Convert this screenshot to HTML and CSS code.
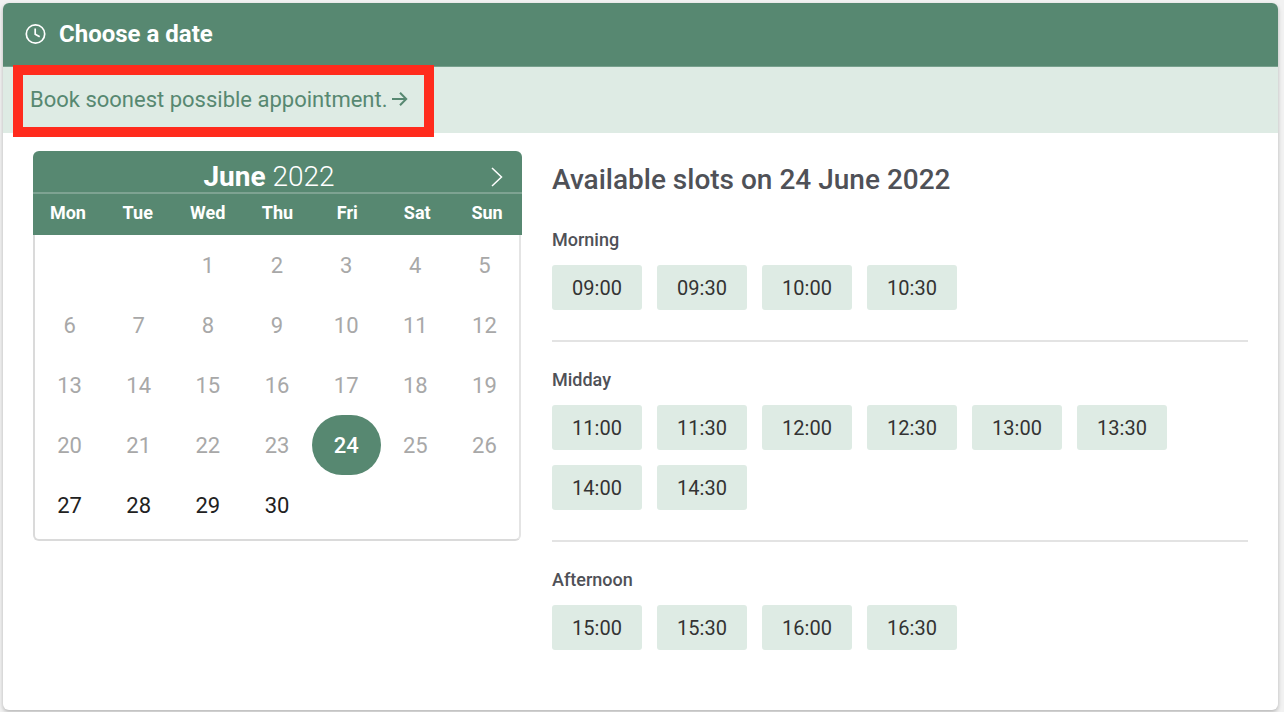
FILE: index.html
```html
<!DOCTYPE html>
<html lang="en">
<head>
<meta charset="utf-8">
<meta name="viewport" content="width=device-width, initial-scale=1">
<title>Choose a date</title>
<link rel="stylesheet" href="styles.css">
</head>
<body>
<main class="card">
  <header class="card-header">
    <svg class="clock" viewBox="0 0 22 22" aria-hidden="true"><circle cx="10.5" cy="11" r="9.2"/><path d="M10.2 5.5v5.7l4.5 2.6"/></svg>
    <h1>Choose a date</h1>
  </header>
  <div class="soonest">
    <a class="soonest-link" href="#slots">Book soonest possible appointment. <svg class="arrow" viewBox="0 0 16 16" aria-hidden="true"><path d="M-1 8h14M7 1.8 13.2 8 7 14.2"/></svg></a>
  </div>
  <div class="content">
    <section class="calendar" aria-label="Calendar">
      <div class="calendar-head">
        <div class="month-bar">
          <h2 class="month"><strong>June</strong> 2022</h2>
          <button class="next" type="button" aria-label="Next month"><svg viewBox="0 0 12 20" aria-hidden="true"><path d="M1 1l9.5 9L1 19"/></svg></button>
        </div>
        <div class="weekdays">
          <span>Mon</span><span>Tue</span><span>Wed</span><span>Thu</span><span>Fri</span><span>Sat</span><span>Sun</span>
        </div>
      </div>
      <div class="days">
        <button class="day first" type="button" disabled>1</button>
        <button class="day" type="button" disabled>2</button>
        <button class="day" type="button" disabled>3</button>
        <button class="day" type="button" disabled>4</button>
        <button class="day" type="button" disabled>5</button>
        <button class="day" type="button" disabled>6</button>
        <button class="day" type="button" disabled>7</button>
        <button class="day" type="button" disabled>8</button>
        <button class="day" type="button" disabled>9</button>
        <button class="day" type="button" disabled>10</button>
        <button class="day" type="button" disabled>11</button>
        <button class="day" type="button" disabled>12</button>
        <button class="day" type="button" disabled>13</button>
        <button class="day" type="button" disabled>14</button>
        <button class="day" type="button" disabled>15</button>
        <button class="day" type="button" disabled>16</button>
        <button class="day" type="button" disabled>17</button>
        <button class="day" type="button" disabled>18</button>
        <button class="day" type="button" disabled>19</button>
        <button class="day" type="button" disabled>20</button>
        <button class="day" type="button" disabled>21</button>
        <button class="day" type="button" disabled>22</button>
        <button class="day" type="button" disabled>23</button>
        <button class="day selected" type="button" aria-pressed="true">24</button>
        <button class="day" type="button" disabled>25</button>
        <button class="day" type="button" disabled>26</button>
        <button class="day" type="button">27</button>
        <button class="day" type="button">28</button>
        <button class="day" type="button">29</button>
        <button class="day" type="button">30</button>
      </div>
    </section>
    <section class="slots" id="slots">
      <h2 class="slots-title">Available slots on 24 June 2022</h2>
      <section class="period">
        <h3>Morning</h3>
        <div class="times">
          <button type="button">09:00</button>
          <button type="button">09:30</button>
          <button type="button">10:00</button>
          <button type="button">10:30</button>
        </div>
      </section>
      <section class="period">
        <h3>Midday</h3>
        <div class="times">
          <button type="button">11:00</button>
          <button type="button">11:30</button>
          <button type="button">12:00</button>
          <button type="button">12:30</button>
          <button type="button">13:00</button>
          <button type="button">13:30</button>
          <button type="button">14:00</button>
          <button type="button">14:30</button>
        </div>
      </section>
      <section class="period">
        <h3>Afternoon</h3>
        <div class="times">
          <button type="button">15:00</button>
          <button type="button">15:30</button>
          <button type="button">16:00</button>
          <button type="button">16:30</button>
        </div>
      </section>
    </section>
  </div>
</main>
</body>
</html>
```
FILE: styles.css
```css
:root {
  --green: #578871;
  --mint: #deebe4;
}
* { box-sizing: border-box; }
body {
  margin: 0;
  padding: 3px 6px 2px 3px;
  background: #f2f2f2;
  font-family: Roboto, "Liberation Sans", sans-serif;
  color: #212121;
}
h1, h2, h3 { margin: 0; }
button {
  font: inherit;
  color: inherit;
  border: 0;
  padding: 0;
  background: none;
}
svg { fill: none; stroke: currentColor; }
.card {
  background: #fff;
  border-radius: 6px;
  box-shadow: 0 2px 4px rgba(0, 0, 0, 0.25);
  padding-bottom: 60px;
}
.card-header {
  display: flex;
  align-items: center;
  gap: 12px;
  height: 64px;
  padding: 0 22px 2px;
  color: #fff;
  background: var(--green);
  border-bottom: 1px solid #77a08d;
  border-radius: 6px 6px 0 0;
}
.card-header h1 { font-size: 24px; line-height: 28px; font-weight: 700; }
.clock { width: 22px; height: 22px; stroke-width: 1.7; }
.soonest {
  display: flex;
  align-items: center;
  height: 66px;
  padding: 0 27px;
  background: var(--mint);
}
.soonest-link {
  position: relative;
  font-size: 22px;
  line-height: 26px;
  color: var(--green);
  text-decoration: none;
}
.soonest-link::after {
  content: "";
  position: absolute;
  inset: -22px -25px -24px -17px;
  border: 10px solid #ff2b1d;
}
.arrow { width: 16px; height: 16px; stroke-width: 2; overflow: visible; }
.content {
  display: grid;
  grid-template-columns: 489fr 696fr;
  gap: 30px;
  align-items: start;
  padding: 18px 30px 0;
}
.calendar-head {
  color: #fff;
  background: var(--green);
  border-radius: 6px 6px 0 0;
}
.month-bar {
  display: grid;
  grid-template-columns: 28px 1fr 40px;
  align-items: center;
  height: 43px;
  padding: 10px 5px 0 0;
  border-bottom: 2px solid #7ea392;
}
.month {
  grid-column: 2;
  text-align: center;
  font-size: 28px;
  line-height: 32px;
  font-weight: 300;
}
.month strong { font-weight: 700; }
.next { display: flex; justify-content: center; }
.next svg { width: 12px; height: 20px; stroke-width: 1.5; }
.weekdays {
  display: grid;
  grid-template-columns: repeat(7, 1fr);
  align-items: center;
  height: 41px;
  padding-bottom: 4px;
  font-size: 18px;
  line-height: 22px;
  font-weight: 700;
  text-align: center;
}
.days {
  display: grid;
  grid-template-columns: repeat(7, 1fr);
  grid-auto-rows: 60px;
  margin-right: 1px;
  padding-bottom: 4px;
  border: solid #dadada;
  border-width: 0 2px 2px;
  border-right-color: #e4e4e4;
  border-radius: 0 0 6px 6px;
}
.day { padding-top: 2px; font-size: 22px; line-height: 26px; }
.day:disabled { color: #a8a8a8; }
.first { grid-column: 3; }
.day.selected {
  color: #fff;
  font-weight: 500;
  background: var(--green);
  border-radius: 36px;
}
.slots { padding-top: 11px; }
.slots-title {
  margin-bottom: 31px;
  font-size: 28px;
  line-height: 36px;
  font-weight: 500;
  color: #4f5157;
}
.period + .period {
  margin-top: 30px;
  padding-top: 27px;
  border-top: 2px solid #e3e3e3;
}
.period h3 {
  margin-bottom: 14px;
  font-size: 18px;
  line-height: 22px;
  font-weight: 500;
  color: #4f5157;
}
.times { display: flex; flex-wrap: wrap; gap: 15px; }
.times button {
  width: 90px;
  height: 45px;
  font-size: 20px;
  line-height: 24px;
  color: #333;
  background: var(--mint);
  border-radius: 3px;
}
```
